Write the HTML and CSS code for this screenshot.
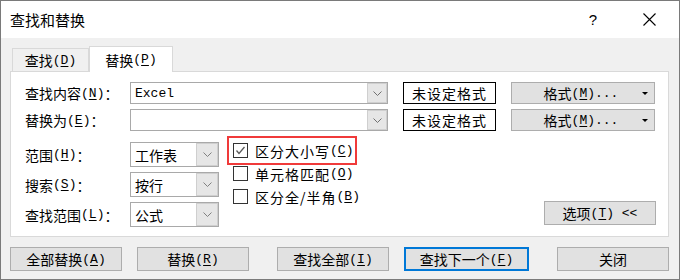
FILE: index.html
```html
<!DOCTYPE html>
<html>
<head>
    <title>查找和替换</title>
    <link rel="stylesheet" href="styles.css">
</head>
<body>
<div class="window">
    <div class="titlebar">
        <span class="title">查找和替换</span>
        <span class="help">?</span>
        <svg class="close" width="13" height="13" viewBox="0 0 13 13">
            <path d="M0.5 0.5 L12.5 12.5 M12.5 0.5 L0.5 12.5" stroke="#000" stroke-width="1.1" fill="none"/>
        </svg>
    </div>

    <div class="content">
        <div class="tabs">
            <div class="tab">查找<span class="key">(<u>D</u>)</span></div>
            <div class="tab active">替换<span class="key">(<u>P</u>)</span></div>
        </div>

        <div class="panel">
            <div class="top-grid">
                <label>查找内容<span class="key">(<u>N</u>)</span>：</label>
                <div class="combo">
                    <span class="value">Excel</span>
                    <span class="arrow"><svg width="9" height="5" viewBox="0 0 9 5"><polyline points="0.5,0.5 4.5,4.5 8.5,0.5" fill="none" stroke="#707070"/></svg></span>
                </div>
                <div class="fmt-none">未设定格式</div>
                <div class="btn fmt-btn">格式<span class="key">(<u>M</u>)...</span><span class="caret"></span></div>

                <label>替换为<span class="key">(<u>E</u>)</span>：</label>
                <div class="combo">
                    <span class="value"></span>
                    <span class="arrow"><svg width="9" height="5" viewBox="0 0 9 5"><polyline points="0.5,0.5 4.5,4.5 8.5,0.5" fill="none" stroke="#707070"/></svg></span>
                </div>
                <div class="fmt-none">未设定格式</div>
                <div class="btn fmt-btn">格式<span class="key">(<u>M</u>)...</span><span class="caret"></span></div>
            </div>

            <div class="lower">
                <div class="opt-grid">
                    <label>范围<span class="key">(<u>H</u>)</span>：</label>
                    <div class="select">
                        <span class="value">工作表</span>
                        <span class="arrow"><svg width="9" height="5" viewBox="0 0 9 5"><polyline points="0.5,0.5 4.5,4.5 8.5,0.5" fill="none" stroke="#808080"/></svg></span>
                    </div>
                    <label>搜索<span class="key">(<u>S</u>)</span>：</label>
                    <div class="select">
                        <span class="value">按行</span>
                        <span class="arrow"><svg width="9" height="5" viewBox="0 0 9 5"><polyline points="0.5,0.5 4.5,4.5 8.5,0.5" fill="none" stroke="#808080"/></svg></span>
                    </div>
                    <label>查找范围<span class="key">(<u>L</u>)</span>：</label>
                    <div class="select">
                        <span class="value">公式</span>
                        <span class="arrow"><svg width="9" height="5" viewBox="0 0 9 5"><polyline points="0.5,0.5 4.5,4.5 8.5,0.5" fill="none" stroke="#808080"/></svg></span>
                    </div>
                </div>

                <div class="checks">
                    <div class="check highlight">
                        <span class="box"><svg width="13" height="13" viewBox="0 0 13 13"><polyline points="2.5,6.5 5,9.5 10.5,3" fill="none" stroke="#5a5a5a" stroke-width="1.3"/></svg></span>
                        区分大小写<span class="key">(<u>C</u>)</span>
                    </div>
                    <div class="check">
                        <span class="box"></span>
                        单元格匹配<span class="key">(<u>O</u>)</span>
                    </div>
                    <div class="check">
                        <span class="box"></span>
                        区分全/半角<span class="key">(<u>B</u>)</span>
                    </div>
                </div>

                <div class="btn options-btn">选项<span class="key">(<u>T</u>)&nbsp;&lt;&lt;</span></div>
            </div>
        </div>

        <div class="footer">
            <div class="btn">全部替换<span class="key">(<u>A</u>)</span></div>
            <div class="btn">替换<span class="key">(<u>R</u>)</span></div>
            <div class="btn spaced">查找全部<span class="key">(<u>I</u>)</span></div>
            <div class="btn default">查找下一个<span class="key">(<u>F</u>)</span></div>
            <div class="btn spaced">关闭</div>
        </div>
    </div>
</div>
</body>
</html>
```

FILE: styles.css
```css
body {
    margin: 0;
    padding: 0;
    font-family: "Noto Sans CJK SC", "Noto Sans", sans-serif;
    font-size: 14px;
    color: #000;
}

.window {
    width: 680px;
    height: 280px;
    box-sizing: border-box;
    border: 1px solid #7a7a7a;
    background-color: #f0f0f0;
}

.titlebar {
    height: 37px;
    background-color: #fff;
    display: flex;
    align-items: center;
    padding-left: 9px;
}

.title {
    font-size: 15px;
    flex: 1;
}

.help {
    font-family: "Liberation Sans", sans-serif;
    font-size: 15px;
    margin-right: 46px;
}

.close {
    margin-right: 23px;
}

.content {
    padding: 0 10px 0 9px;
}

/* mnemonic parts like (N) */
.key {
    font-family: "Liberation Mono", monospace;
    font-size: 13px;
}

.key u {
    text-underline-offset: 2px;
}

.tabs {
    display: flex;
    align-items: flex-end;
    height: 33px;
    padding-left: 2px;
}

.tab {
    height: 23px;
    box-sizing: border-box;
    border: 1px solid #d9d9d9;
    border-bottom: none;
    display: flex;
    align-items: center;
    justify-content: center;
    width: 77px;
}

.tab.active {
    height: 26px;
    width: 84px;
    background-color: #fff;
    margin-bottom: -1px;
    position: relative;
    z-index: 1;
}

.panel {
    height: 166px;
    box-sizing: border-box;
    background-color: #fff;
    border: 1px solid #d9d9d9;
    padding: 10px 12px 0 14px;
}

.top-grid {
    display: grid;
    grid-template-columns: 90px 258px 93px 144px;
    grid-auto-rows: 22px;
    column-gap: 15px;
    row-gap: 5px;
}

.top-grid > label,
.opt-grid > label {
    display: flex;
    align-items: center;
    white-space: nowrap;
}

.combo,
.select {
    display: flex;
    border: 1px solid #a9a9a9;
    box-sizing: border-box;
    background-color: #fff;
}

.combo .value,
.select .value {
    flex: 1;
    display: flex;
    align-items: center;
    padding-left: 4px;
}

.combo .value {
    font-family: "Liberation Mono", monospace;
    font-size: 13px;
}

.arrow {
    width: 20px;
    display: flex;
    align-items: center;
    justify-content: center;
    background-color: #e6e6e6;
    border: 1px solid #cfcfcf;
    box-sizing: border-box;
}

.fmt-none {
    border: 1px solid #000;
    box-sizing: border-box;
    display: flex;
    align-items: center;
    justify-content: center;
    letter-spacing: 1px;
}

.btn {
    background-color: #e1e1e1;
    border: 1px solid #adadad;
    box-sizing: border-box;
    display: flex;
    align-items: center;
    justify-content: center;
}

.fmt-btn {
    position: relative;
    padding-right: 4px;
}

.caret {
    position: absolute;
    right: 6px;
    top: 9px;
    border-left: 3px solid transparent;
    border-right: 3px solid transparent;
    border-top: 3px solid #000;
}

.lower {
    display: flex;
    margin-top: 11px;
}

.opt-grid {
    display: grid;
    grid-template-columns: 105px 89px;
    grid-auto-rows: 25px;
    row-gap: 5px;
}

.select .arrow {
    width: 22px;
}

.checks {
    margin-left: 8px;
    display: flex;
    flex-direction: column;
}

.check {
    display: flex;
    align-items: center;
    height: 23px;
    padding-left: 6px;
    white-space: nowrap;
    letter-spacing: 1px;
}

.check .key {
    letter-spacing: 0;
}

.check.highlight {
    height: 29px;
    width: 130px;
    box-sizing: border-box;
    border: 2px solid #f03a3a;
    padding-left: 4px;
    margin-top: -6px;
    margin-bottom: -3px;
}

.box {
    width: 15px;
    height: 15px;
    box-sizing: border-box;
    border: 1px solid #333;
    margin-right: 7px;
    display: flex;
    align-items: center;
    justify-content: center;
}

.options-btn {
    margin-left: auto;
    align-self: flex-end;
    width: 112px;
    height: 24px;
    margin-bottom: 2px;
}

.footer {
    display: flex;
    margin-top: 10px;
    gap: 15px;
}

.footer .btn {
    width: 112px;
    height: 24px;
}

.footer .spaced {
    margin-left: 13px;
}

.footer .default {
    width: 125px;
    border: 2px solid #0078d7;
}
```
